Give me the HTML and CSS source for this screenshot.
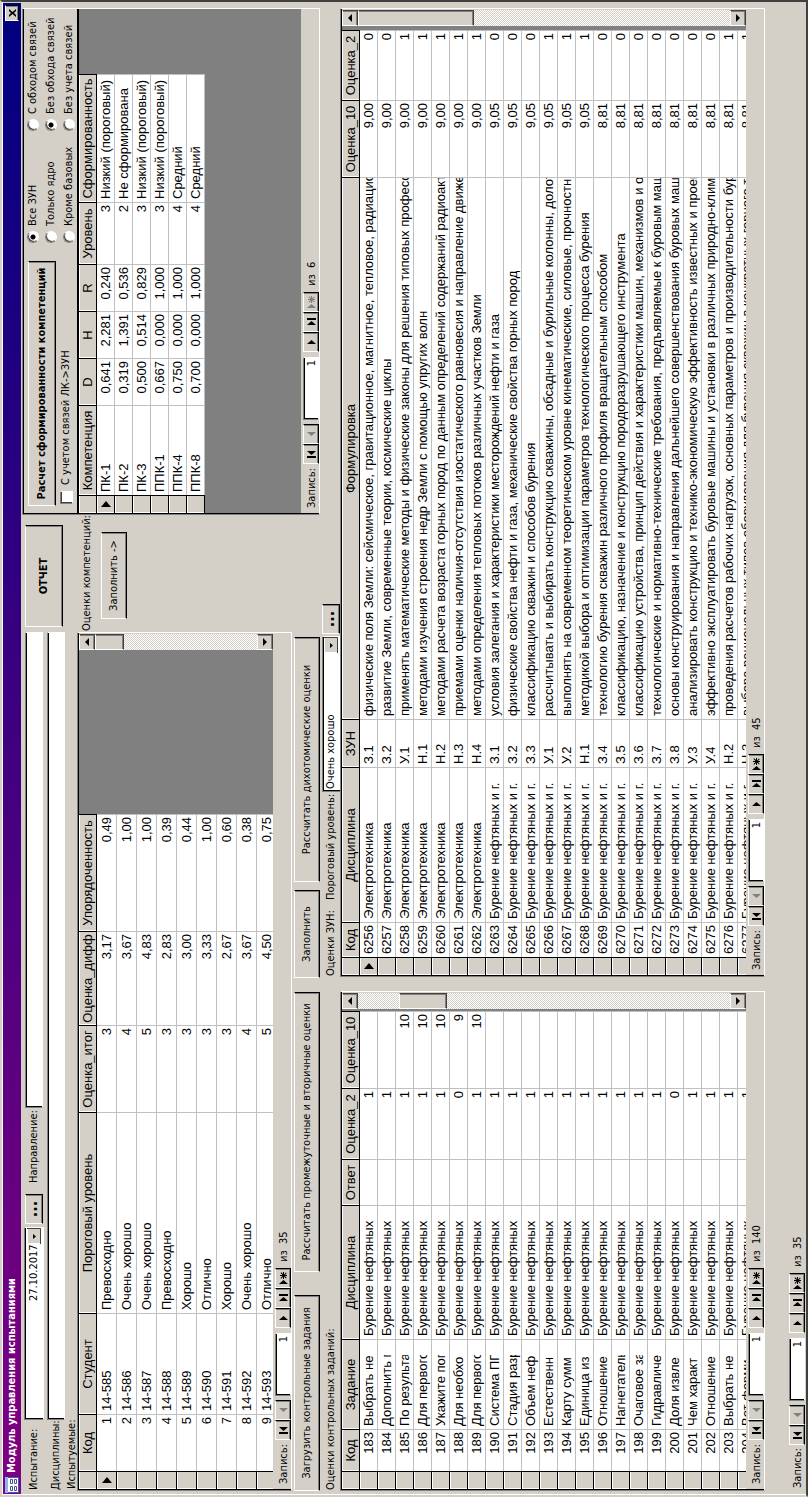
FILE: index.html
```html
<!DOCTYPE html>
<html lang="ru">
<head>
<meta charset="utf-8">
<title>Модуль управления испытаниями</title>
<link rel="stylesheet" href="styles.css">
<script src="app.js" defer></script>
</head>
<body>
<div class="window">
  <header class="titlebar">
    <svg class="app-icon" viewBox="0 0 16 16" aria-hidden="true">
      <rect x="0" y="1" width="16" height="14" fill="#2f62c8"/>
      <rect x="0" y="1" width="16" height="3" fill="#8fb4f4"/>
      <rect x="1" y="4" width="14" height="10" fill="#fff"/>
      <g fill="#fff" stroke="#44588c"><path d="M2.500 6.500h4v2h-4zM9.500 6.500h4v2h-4zM2.500 10.500h4v2h-4zM9.500 10.500h4v2h-4z"/></g>
    </svg>
    <h1 class="title">Модуль управления испытаниями</h1>
    <button class="btn close" type="button" aria-label="Закрыть"><svg viewBox="0 0 8 7" width="8" height="7"><path d="M0 0h2l2 2 2-2h2L5 3.500 8 7H6L4 5 2 7H0l3-3.500z"/></svg></button>
  </header>

  <main class="main">
    <section class="upper">
      <div class="upper-left">
        <div class="exam">
          <div class="fields">
            <div class="row row-exam">
              <label class="lbl" for="exam">Испытание:</label>
              <select id="exam" class="field combo date"><option>27.10.2017</option></select>
              <button class="btn dots" type="button">...</button>
              <label class="lbl direction-lbl" for="direction">Направление:</label>
              <input id="direction" class="field grow" type="text">
            </div>
            <div class="row row-disc">
              <label class="lbl" for="disciplines">Дисциплины:</label>
              <input id="disciplines" class="field grow" type="text">
            </div>
            <h2 class="lbl students-lbl">Испытуемые:</h2>
            <div class="sheet students">
              <div class="sheet-body">
                <div class="grid-wrap"><table id="students" class="grid tall"></table></div>
                <div class="scroll"><button class="btn sb up" type="button" aria-label="Вверх"></button><div class="thumb thumb-a"></div><button class="btn sb down" type="button" aria-label="Вниз"></button></div>
              </div>
              <div class="recnav" data-total="35"></div>
            </div>
          </div>
          <div class="side">
            <button class="btn report" type="button">ОТЧЕТ</button>
            <h2 class="lbl comp-lbl">Оценки компетенций:</h2>
            <button class="btn fill" type="button">Заполнить -&gt;</button>
          </div>
        </div>
        <div class="toolbar">
          <button class="btn load" type="button">Загрузить контрольные задания</button>
          <button class="btn calc-mid" type="button">Рассчитать промежуточные и вторичные оценки</button>
          <button class="btn fill-zun" type="button">Заполнить</button>
          <button class="btn calc-dich" type="button">Рассчитать дихотомические оценки</button>
        </div>
        <div class="captions">
          <h2 class="lbl tasks-lbl">Оценки контрольных заданий:</h2>
          <h2 class="lbl zun-lbl">Оценки ЗУН:</h2>
          <label class="lbl level-lbl" for="level">Пороговый уровень:</label>
          <select id="level" class="field combo level"><option>Очень хорошо</option></select>
          <button class="btn dots" type="button">...</button>
        </div>
      </div>

      <div class="competence">
        <div class="options">
          <div class="calc">
            <button class="btn calc-comp" type="button">Расчет сформированности компетенций</button>
            <label class="check"><input type="checkbox"> С учетом связей ЛК-&gt;ЗУН</label>
          </div>
          <div class="radios radios-scope">
            <label><input type="radio" name="scope" checked>Все ЗУН</label>
            <label><input type="radio" name="scope">Только ядро</label>
            <label><input type="radio" name="scope">Кроме базовых</label>
          </div>
          <div class="radios">
            <label><input type="radio" name="links">С обходом связей</label>
            <label><input type="radio" name="links" checked>Без обхода связей</label>
            <label><input type="radio" name="links">Без учета связей</label>
          </div>
        </div>
        <div class="sheet-body comp-body">
          <div class="grid-wrap"><table id="competences" class="grid narrow"></table></div>
        </div>
        <div class="recnav last-off" data-total="6"></div>
      </div>
    </section>

    <section class="lower">
      <div class="sheet tasks">
        <div class="sheet-body">
          <div class="grid-wrap"><table id="tasks" class="grid"></table></div>
          <div class="scroll"><button class="btn sb up" type="button" aria-label="Вверх"></button><div class="thumb thumb-b"></div><button class="btn sb down" type="button" aria-label="Вниз"></button></div>
        </div>
        <div class="recnav" data-total="140"></div>
      </div>
      <div class="sheet zun">
        <div class="sheet-body">
          <div class="grid-wrap"><table id="zun" class="grid full"></table></div>
          <div class="scroll"><button class="btn sb up" type="button" aria-label="Вверх"></button><div class="thumb thumb-c"></div><button class="btn sb down" type="button" aria-label="Вниз"></button></div>
        </div>
        <div class="recnav" data-total="45"></div>
      </div>
    </section>
  </main>
  <footer class="recnav window-nav" data-total="35"></footer>
</div>
</body>
</html>
```

FILE: styles.css
```css
:root {
  --face: #d4d0c8;
  --shade: #808080;
  --dark: #404040;
  --line: #c0c0c0;
  --ui: "DejaVu Sans Condensed", "Noto Sans", sans-serif;
  --cell: "Liberation Sans", Arial, sans-serif;
}
* { box-sizing: border-box; }
html, body { height: 100%; overflow: hidden; }
body { margin: 0; background: var(--face); }

/* The form is shown turned a quarter counter-clockwise. */
.window {
  width: 100vh;
  height: 100vw;
  transform-origin: 0 0;
  transform: translateY(100vh) rotate(-90deg);
  display: flex;
  flex-direction: column;
  padding: 1px;
  background: var(--face);
  border: 2px solid;
  border-color: var(--face) var(--dark) var(--dark) var(--face);
  box-shadow: inset 1px 1px #fff;
  font: 11px/14px var(--ui);
  color: #000;
}
button, input, select { font: inherit; color: inherit; margin: 0; border-radius: 0; }

.titlebar {
  display: flex;
  align-items: center;
  height: 18px;
  padding: 0 2px 0 1px;
  gap: 4px;
  background: linear-gradient(90deg, #800080, #000080);
  color: #fff;
}
.app-icon { width: 16px; height: 16px; }
.title { margin: 0; flex: 1; font-size: 11px; line-height: 14px; font-weight: bold; }

.btn {
  background: var(--face);
  border: 1px solid;
  border-color: #fff #000 #000 #fff;
  box-shadow: inset -1px -1px var(--shade);
  padding: 0;
  text-align: center;
  white-space: nowrap;
}
.close { width: 16px; height: 14px; display: grid; place-items: center; }

.main { flex: 1; min-height: 0; display: flex; flex-direction: column; padding: 1px 5px 0 3px; }
.upper { display: flex; justify-content: space-between; }
.upper-left { flex: 1; min-width: 0; display: flex; flex-direction: column; }
.exam { display: flex; height: 270px; }
.fields { flex: 1; min-width: 0; display: flex; flex-direction: column; padding-top: 2px; }
.side { width: 116px; display: flex; flex-direction: column; padding-top: 3px; }
.lbl { margin: 0; font-size: 11px; line-height: 14px; font-weight: normal; white-space: nowrap; }
.row { display: flex; align-items: center; padding-left: 1px; padding-right: 1px; }
.row .lbl { width: 70px; flex: none; }
.row-exam { height: 20px; }
.row-disc { height: 18px; margin-top: 3px; }
.row .direction-lbl { width: 75px; margin-left: 11px; }
.field {
  height: 18px;
  background: #fff;
  border: 1px solid;
  border-color: var(--shade) #fff #fff var(--shade);
  box-shadow: inset 1px 1px #000;
  padding: 0 2px 0 4px;
  outline: 0;
  min-width: 0;
}
.grow { flex: 1; }
.combo {
  appearance: none;
  background: #fff url("data:image/svg+xml,%3Csvg xmlns='http://www.w3.org/2000/svg' width='16' height='14'%3E%3Cpath fill='%23d4d0c8' d='M0 0h16v14H0z'/%3E%3Cpath fill='none' stroke='%23fff' d='M.5 13V.5H15'/%3E%3Cpath fill='none' stroke='%23404040' d='M15.500 0v13.500H0'/%3E%3Cpath d='M5 6h5L7.500 9z'/%3E%3C/svg%3E") no-repeat right center;
}
.date { width: 193px; height: 20px; padding-left: 118px; }
.level { width: 156px; height: 19px; padding-left: 2px; }
.dots { width: 30px; height: 18px; font-size: 16px; line-height: 10px; font-weight: bold; padding-bottom: 4px; }
.row .dots { margin-left: 3px; }
.students-lbl { padding-left: 2px; height: 12px; line-height: 13px; }
.students { flex: 1; min-height: 0; margin-right: 1px; }

.report { width: 102px; height: 38px; margin-left: 4px; font-weight: bold; }
.comp-lbl { margin-top: 17px; }
.fill { width: 87px; height: 26px; margin: 7px 0 0 12px; }

.toolbar { display: flex; height: 28px; padding: 2px 0 0; }
.toolbar .btn { height: 26px; }
.load { width: 196px; }
.calc-mid { width: 280px; margin-left: 23px; }
.fill-zun { width: 88px; margin-left: 14px; }
.calc-dich { width: 245px; margin-left: 8px; }
.captions { display: flex; align-items: center; height: 20px; padding-top: 2px; }
.tasks-lbl { width: 515px; padding-left: 1px; }
.zun-lbl { width: 76px; }
.level-lbl { width: 108px; }
.captions .dots { margin-left: 2px; }

.sheet, .competence {
  display: flex;
  flex-direction: column;
  border: 1px solid;
  border-color: var(--shade) #fff #fff var(--shade);
  box-shadow: inset 1px 1px #000;
  padding: 1px 1px 0 1px;
}
.competence { width: 507px; height: 298px; flex: none; padding: 1px 0 0 0; }
.competence .recnav { padding-left: 5px; margin-left: 1px; }
.options { display: flex; height: 53px; padding-left: 8px; }
.calc { width: 263px; padding-top: 4px; }
.calc-comp { width: 245px; height: 28px; font-weight: bold; }
.check { display: flex; align-items: center; height: 20px; gap: 6px; padding-left: 2px; }
.radios { display: flex; flex-direction: column; }
.radios-scope { width: 112px; }
.radios label { display: flex; align-items: center; height: 18px; flex: none; gap: 5px; white-space: nowrap; }
input[type="checkbox"] {
  appearance: none;
  width: 13px;
  height: 13px;
  background: #fff;
  border: 1px solid;
  border-color: var(--shade) #fff #fff var(--shade);
  box-shadow: inset 1px 1px var(--dark);
}
input[type="radio"] {
  appearance: none;
  width: 12px;
  height: 12px;
  border-radius: 50%;
  border: 1px solid;
  border-color: var(--shade) #fff #fff var(--shade);
  background: #fff;
  box-shadow: inset 1px 1px var(--dark);
}
input[type="radio"]:checked { background: radial-gradient(circle, #000 2px, #fff 3px); }

.sheet-body { flex: 1; min-height: 0; display: flex; background: var(--shade); overflow: hidden; }
.comp-body { border-top: 2px solid #000; border-left: 1px solid #000; }
.grid-wrap { flex: 1; min-width: 0; overflow: hidden; }
.grid { border-collapse: separate; border-spacing: 0; table-layout: fixed; width: 478px; font: 13px/16px var(--cell); }
.grid.tall { width: 675px; }
.grid.narrow { width: 439px; }
.grid.full { width: 100%; }
.zun .grid-wrap { margin-right: 4px; }
.grid th {
  height: 18px;
  padding: 0;
  background: var(--face);
  font-weight: normal;
  border-right: 1px solid #000;
  border-bottom: 1px solid #000;
  box-shadow: inset 1px 1px #fff;
  text-align: center;
}
.grid td {
  height: 18px;
  padding: 0 2px 0 3px;
  background: #fff;
  border-right: 1px solid var(--line);
  border-bottom: 1px solid var(--line);
  white-space: nowrap;
}
.grid.tall td { height: 20px; }
.grid td div { overflow: hidden; }
.grid td.num { text-align: right; }
.grid td.clip { padding-right: 15px; }
.grid td.wide { padding-right: 0; }
.grid tbody th { vertical-align: middle; }
.marker { display: block; width: 6px; height: 10px; margin: 0 auto; }

.scroll {
  width: 16px;
  display: flex;
  flex-direction: column;
  background: repeating-conic-gradient(#fff 0 25%, var(--face) 0 50%) 0 0 / 2px 2px;
}
.sb { height: 16px; flex: none; border-color: #fff var(--dark) var(--dark) #fff; }
.sb::after {
  content: "";
  display: block;
  width: 0;
  margin: 0 auto;
  border: 4px solid transparent;
}
.sb.up::after { border-top: 0; border-bottom-color: #000; }
.sb.down::after { border-bottom: 0; border-top-color: #000; }
.sb.down { margin-top: auto; }
.thumb {
  background: var(--face);
  border: 1px solid;
  border-color: #fff var(--dark) var(--dark) #fff;
  box-shadow: inset -1px -1px var(--shade);
}
.thumb-a { height: 29px; }
.thumb-b { height: 48px; margin-top: 41px; }
.thumb-c { height: 116px; }

.recnav { display: flex; align-items: flex-end; height: 18px; flex: none; background: var(--face); padding-left: 5px; }
.recnav .lbl { width: 44px; }
.nav-btn { width: 20px; height: 16px; display: grid; place-items: center; }
.nav-btn svg { width: 16px; height: 11px; fill: currentColor; }
.nav-btn:disabled { color: var(--shade); }
.nav-num { width: 63px; height: 16px; margin: 0 5px 0 4px; text-align: right; }
.nav-total { margin-left: 6px; white-space: pre; }

.lower { flex: 1; min-height: 0; display: flex; gap: 14px; }
.tasks { width: 500px; }
.zun { flex: 1; min-width: 0; }
.window-nav { margin: 23px 0 0 1px; height: 17px; }
.window-nav .lbl { width: 43px; }
```

FILE: app.js
```javascript
const ELECTRO = "Электротехника";

function buildGrid(id, columns, rows, markerRow) {
  const table = document.getElementById(id);
  const cols = [18].concat(columns.map(c => c.width));
  const group = document.createElement("colgroup");
  cols.forEach(w => {
    const col = document.createElement("col");
    if (w) col.style.width = w + "px";
    group.append(col);
  });
  const head = table.createTHead().insertRow();
  table.prepend(group);
  head.append(document.createElement("th"));
  columns.forEach(c => {
    const th = document.createElement("th");
    th.scope = "col";
    th.textContent = c.name;
    head.append(th);
  });
  const body = table.createTBody();
  rows.forEach((row, i) => {
    const tr = body.insertRow();
    const sel = document.createElement("th");
    if (i === markerRow) sel.innerHTML = '<svg class="marker" viewBox="0 0 6 10"><path d="M0 0l6 5-6 5z"/></svg>';
    tr.append(sel);
    columns.forEach((c, k) => {
      const td = tr.insertCell();
      if (c.kind) td.className = c.kind;
      const div = document.createElement("div");
      div.textContent = row[k] ?? "";
      td.append(div);
    });
  });
}

buildGrid("students", [
  { name: "Код", width: 57, kind: "num" },
  { name: "Студент", width: 101 },
  { name: "Пороговый уровень", width: 201 },
  { name: "Оценка_итог", width: 87, kind: "num" },
  { name: "Оценка_дифф", width: 94, kind: "num" },
  { name: "Упорядоченность", width: 117, kind: "num" }
], [
  [1, "14-585", "Превосходно", 3, "3,17", "0,49"],
  [2, "14-586", "Очень хорошо", 4, "3,67", "1,00"],
  [3, "14-587", "Очень хорошо", 5, "4,83", "1,00"],
  [4, "14-588", "Превосходно", 3, "2,83", "0,39"],
  [5, "14-589", "Хорошо", 3, "3,00", "0,44"],
  [6, "14-590", "Отлично", 3, "3,33", "1,00"],
  [7, "14-591", "Хорошо", 3, "2,67", "0,60"],
  [8, "14-592", "Очень хорошо", 4, "3,67", "0,38"],
  [9, "14-593", "Отлично", 5, "4,50", "0,75"]
], 0);

buildGrid("competences", [
  { name: "Компетенция", width: 90 },
  { name: "D", width: 47, kind: "num" },
  { name: "H", width: 47, kind: "num" },
  { name: "R", width: 47, kind: "num" },
  { name: "Уровень", width: 62, kind: "num" },
  { name: "Сформированность", width: 128 }
], [
  ["ПК-1", "0,641", "2,281", "0,240", 3, "Низкий (пороговый)"],
  ["ПК-2", "0,319", "1,391", "0,536", 2, "Не сформирована"],
  ["ПК-3", "0,500", "0,514", "0,829", 3, "Низкий (пороговый)"],
  ["ППК-1", "0,667", "0,000", "1,000", 3, "Низкий (пороговый)"],
  ["ППК-4", "0,750", "0,000", "1,000", 4, "Средний"],
  ["ППК-8", "0,700", "0,000", "1,000", 4, "Средний"]
], 0);

const taskNames = [
  "Выбрать не", "Дополнить п", "По результа", "Для первого", "Укажите пог", "Для необхо",
  "Для первого", "Система ПГ", "Стадия разр", "Объем неф", "Естественн", "Карту сумм",
  "Единица из", "Отношение", "Нагнетатель", "Очаговое за", "Гидравличе", "Доля извле",
  "Чем характ", "Отношение", "Выбрать не", "Вот форми"
];
const tens = { 185: 10, 186: 10, 187: 10, 188: 9, 189: 10 };
buildGrid("tasks", [
  { name: "Код", width: 42, kind: "num" },
  { name: "Задание", width: 90, kind: "clip" },
  { name: "Дисциплина", width: 134, kind: "clip" },
  { name: "Ответ", width: 46 },
  { name: "Оценка_2", width: 71, kind: "num" },
  { name: "Оценка_10", width: 77, kind: "num" }
], taskNames.map((name, i) => {
  const code = 183 + i;
  return [code, name, "Бурение нефтяных", "", code === 188 || code === 200 ? 0 : 1, tens[code]];
}), -1);

buildGrid("zun", [
  { name: "Код", width: 35, kind: "num" },
  { name: "Дисциплина", width: 155, kind: "clip" },
  { name: "ЗУН", width: 48 },
  { name: "Формулировка", width: 0, kind: "wide" },
  { name: "Оценка_10", width: 77, kind: "num" },
  { name: "Оценка_2", width: 70, kind: "num" }
], [
  ["З.1", "физические поля Земли: сейсмическое, гравитационное, магнитное, тепловое, радиационное", 0],
  ["З.2", "развитие Земли, современные теории, космические циклы", 0],
  ["У.1", "применять математические методы и физические законы для решения типовых профессиональных", 1],
  ["Н.1", "методами изучения строения недр Земли с помощью упругих волн", 1],
  ["Н.2", "методами расчета возраста горных пород по данным определений содержаний радиоактивных", 1],
  ["Н.3", "приемами оценки наличия-отсутствия изостатического равновесия и направление движения", 1],
  ["Н.4", "методами определения тепловых потоков различных участков Земли", 1],
  ["З.1", "условия залегания и характеристики месторождений нефти и газа", 0],
  ["З.2", "физические свойства нефти и газа, механические свойства горных пород", 0],
  ["З.3", "классификацию скважин и способов бурения", 0],
  ["У.1", "рассчитывать и выбирать конструкцию скважины, обсадные и бурильные колонны, долота", 1],
  ["У.2", "выполнять на современном теоретическом уровне кинематические, силовые, прочностные", 1],
  ["Н.1", "методикой выбора и оптимизации параметров технологического процесса бурения", 1],
  ["З.4", "технологию бурения скважин различного профиля вращательным способом", 0],
  ["З.5", "классификацию, назначение и конструкцию породоразрушающего инструмента", 0],
  ["З.6", "классификацию устройства, принцип действия и характеристики машин, механизмов и оборудования", 0],
  ["З.7", "технологические и нормативно-технические требования, предъявляемые к буровым маш", 0],
  ["З.8", "основы конструирования и направления дальнейшего совершенствования буровых маш", 0],
  ["У.3", "анализировать конструкцию и технико-экономическую эффективность известных и проектируемых", 0],
  ["У.4", "эффективно эксплуатировать буровые машины и установки в различных природно-климатических", 0],
  ["Н.2", "проведения расчетов рабочих нагрузок, основных параметров и производительности буровых", 1],
  ["Н.3", "выбора рациональных типов оборудования для бурения скважин в конкретных горного типа", 1]
].map(([zun, text, two], i) => [
  6256 + i, i < 7 ? ELECTRO : "Бурение нефтяных и г.", zun, text, i < 7 ? "9,00" : i < 13 ? "9,05" : "8,81", two
]), 0);

const icons = {
  first: '<path d="M4 1h2v9H4zM11 1v9L7 5.500z"/>',
  prev: '<path d="M10 1v9L6 5.500z"/>',
  next: '<path d="M6 1v9l4-4.500z"/>',
  last: '<path d="M5 1v9l4-4.500zM10 1h2v9h-2z"/>',
  add: '<path d="M2 1v9l4-4.500zM10 2h1v7h-1zM7 5h7v1H7zM8 2.500l5.500 5.500-.7.7L7.300 3.200zM13 2.500l.7.700L8.200 8.700 7.500 8z"/>'
};
const navButton = (icon, label, off) =>
  `<button class="btn nav-btn" type="button" aria-label="${label}"${off ? " disabled" : ""}><svg viewBox="0 0 16 11">${icons[icon]}</svg></button>`;

document.querySelectorAll(".recnav").forEach((nav, i) => {
  nav.innerHTML =
    `<label class="lbl" for="rec${i}">Запись:</label>` +
    navButton("first", "Первая запись") +
    navButton("prev", "Предыдущая запись", true) +
    `<input id="rec${i}" class="field nav-num" type="text" value="1">` +
    navButton("next", "Следующая запись") +
    navButton("last", "Последняя запись") +
    navButton("add", "Новая запись", nav.classList.contains("last-off")) +
    `<span class="nav-total">из  ${nav.dataset.total}</span>`;
});
```
